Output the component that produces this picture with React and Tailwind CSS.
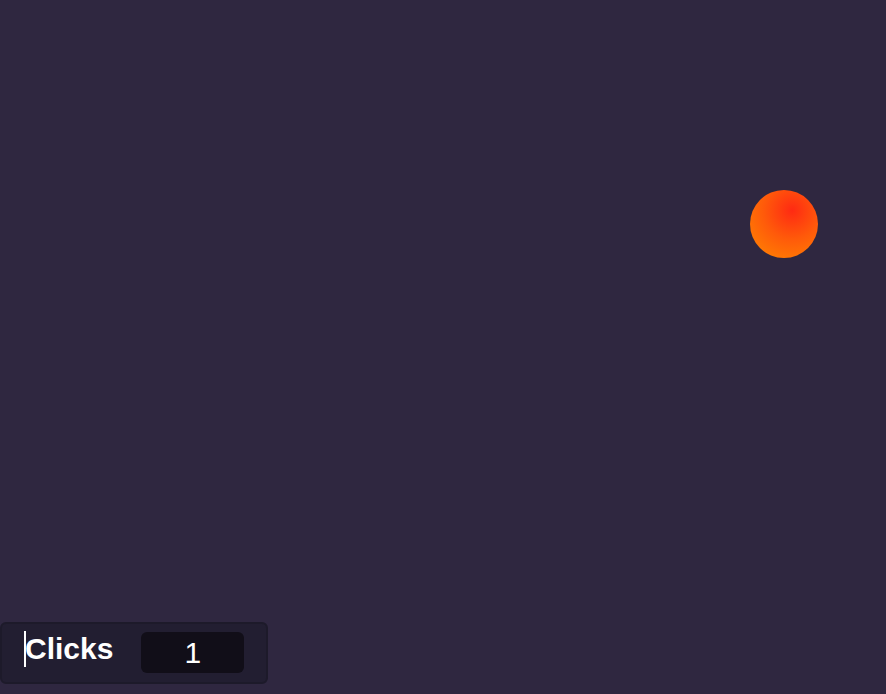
export default function App() {
  return (
    <div className="relative h-[694px] w-full overflow-hidden bg-[#2f2740] flex flex-col justify-end pb-[10px]" style={{ fontFamily: '"Liberation Sans", Arial, sans-serif' }}>
      <div
        className="absolute left-[750px] top-[190px] h-[68px] w-[68px] rounded-full"
        style={{ background: "radial-gradient(circle at 62% 30%, #ff2a12 0%, #ff5a0a 45%, #ff8a00 100%)" }}
      />
      <div className="flex items-start w-[268px] h-[62px] rounded-md border-2 border-[#1d1a2a] bg-[#221e31] pl-[22px]">
        <span className="mt-[7px] w-[2px] h-[36px] bg-white" />
        <span className="mt-[10px] -ml-px text-[30px] font-bold text-white leading-none">Clicks</span>
        <div className="mt-[8px] ml-[28px] flex h-[41px] w-[103px] items-center justify-center rounded-md bg-[#110e18] text-[30px] leading-none text-white">1</div>
      </div>
    </div>
  );
}
